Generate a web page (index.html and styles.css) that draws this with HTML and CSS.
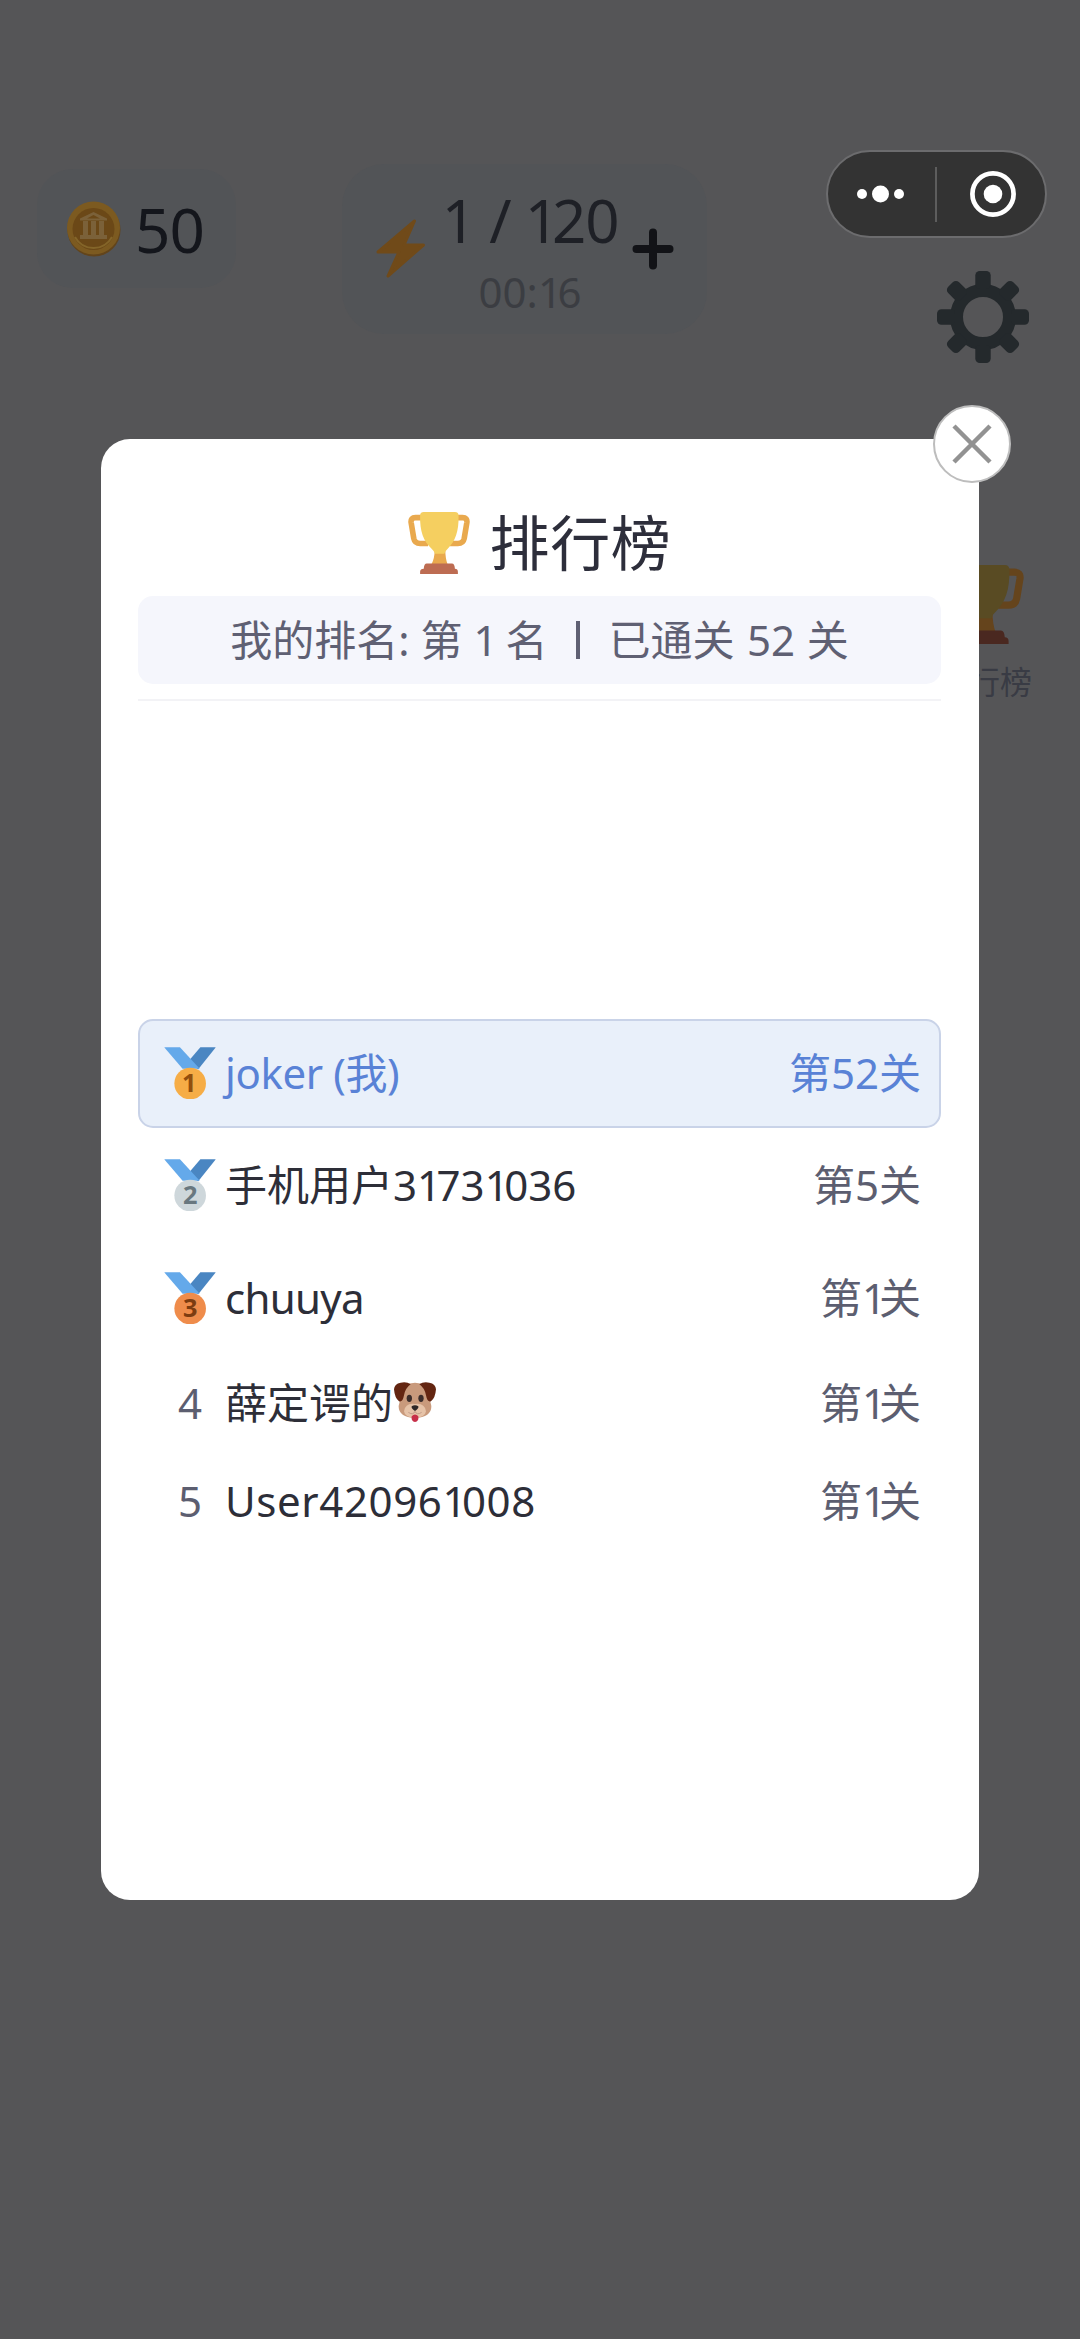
FILE: index.html
```html
<!DOCTYPE html>
<html lang="zh-CN">
<head>
<meta charset="utf-8">
<title>排行榜</title>
<link rel="stylesheet" href="styles.css">
</head>
<body>
<svg class="defs" width="0" height="0" aria-hidden="true">
  <symbol id="trophy" viewBox="0 0 186 187">
    <path class="t-handle" d="M40 17H22Q7 17 9 32L17 80Q20 95 36 95H60M146 17H164Q179 17 177 32L169 80Q166 95 150 95H126"/>
    <path class="t-stem" d="M80 112H112Q112 140 119 158H70Q80 140 80 112Z"/>
    <path class="t-bowl" d="M36 10Q37 0 47 0H141Q151 0 152 10C153 60 142 88 120 110Q112 117 109 126H81Q78 117 70 110C46 88 35 60 36 10Z"/>
    <path class="t-base" d="M56 155H132Q140 155 141 171Q150 171 150 180V187H36V180Q36 171 47 171Q48 155 56 155Z"/>
  </symbol>
  <symbol id="ribbon" viewBox="0 0 157 158">
    <path fill="#4a86c2" d="M110 1H157L103 68L75 42Z"/>
    <path fill="#64a9ea" d="M0 1H48L108 66H56Z"/>
    <circle cx="79" cy="111" r="48"/>
  </symbol>
</svg>

<header class="topbar">
  <div class="pill coins">
    <svg class="coin" viewBox="0 0 54 56">
      <circle cx="27" cy="29" r="26.500" fill="#62441b"/>
      <circle cx="26.500" cy="27" r="26.500" fill="#7c5a20"/>
      <circle cx="26.500" cy="28" r="21" fill="#6b4817"/>
      <path d="M8 36a21 21 0 0 0 37 0" fill="none" stroke="#846529" stroke-width="2"/>
      <path fill="#7b6139" d="M26.500 11L40 17.500V19.500H13V17.500ZM16 20H21V34H16ZM24 20H29V34H24ZM32 20H37V34H32ZM13 34H40V38H13Z"/>
      <path fill="#6b4817" d="M20 17.500L26.500 14L33 17.500Z"/>
    </svg>
    <span class="big">50</span>
  </div>
  <div class="pill energy">
    <svg class="bolt" viewBox="0 0 50 60"><path d="M38.500 2L28 26H47.500L12 57L23 33H2Z"/></svg>
    <div class="energy-text">
      <span class="mid">1 / <span class="one">1</span>20</span>
      <span class="timer">00:<span class="one">1</span>6</span>
    </div>
    <svg class="plus" viewBox="0 0 42 42"><path d="M21 4.500V37.500M4.500 21H37.500"/></svg>
  </div>
  <div class="side">
    <div class="capsule">
      <svg class="dots" viewBox="0 0 48 18"><circle cx="5" cy="9" r="5"/><circle cx="23.500" cy="9" r="8.500"/><circle cx="42" cy="9" r="5"/></svg>
      <i class="bar"></i>
      <svg class="target" viewBox="0 0 46 46"><circle cx="23" cy="23" r="20.600" fill="none" stroke="#fff" stroke-width="4.700"/><circle cx="23" cy="23" r="9.300"/></svg>
    </div>
    <svg class="gear" viewBox="-46 -46 92 92">
      <circle r="26.500" fill="none" stroke="#24292c" stroke-width="13"/>
      <g id="teeth"><rect x="-7.700" y="-46" width="15.400" height="18" rx="4.500"/><rect x="-7.700" y="28" width="15.400" height="18" rx="4.500"/><rect x="-46" y="-7.700" width="18" height="15.400" rx="4.500"/><rect x="28" y="-7.700" width="18" height="15.400" rx="4.500"/></g>
      <use href="#teeth" transform="rotate(45)"/>
    </svg>
    <div class="rank-entry">
      <svg class="trophy dim"><use href="#trophy"/></svg>
      <span>排行榜</span>
    </div>
  </div>
</header>

<section class="modal">
  <button class="close" aria-label="关闭"><svg viewBox="0 0 42 42"><path d="M3 3L39 39M39 3L3 39"/></svg></button>
  <h1 class="title"><svg class="trophy"><use href="#trophy"/></svg><span>排行榜</span></h1>
  <p class="mine"><span>我的排名: 第</span><span class="v1">1</span><span>名</span><span class="sep"></span><span>已通关</span><span class="v52">52</span><span>关</span></p>
  <ol class="list">
    <li class="row me"><span class="rank"><svg class="medal" viewBox="0 0 157 158"><use href="#ribbon" fill="#f6ad46"/><text x="76" y="138" fill="#914f0e">1</text></svg></span><span class="name joker">joker (我)</span><span class="level">第52关</span></li>
    <li class="row"><span class="rank"><svg class="medal" viewBox="0 0 157 158"><use href="#ribbon" fill="#ced7db"/><text x="79" y="138" fill="#68777f">2</text></svg></span><span class="name">手机用户3<span class="one">1</span>73<span class="one">1</span>036</span><span class="level">第5关</span></li>
    <li class="row"><span class="rank"><svg class="medal" viewBox="0 0 157 158"><use href="#ribbon" fill="#ef8c4b"/><text x="79" y="138" fill="#7d3c10">3</text></svg></span><span class="name chu">chuuya</span><span class="level">第<span class="one">1</span>关</span></li>
    <li class="row short"><span class="rank">4</span><span class="name">薛定谔的<svg class="dog" viewBox="0 0 126 120">
      <path fill="#c99a7c" d="M30 12Q63-8 96 12Q106 42 112 72Q113 105 63 108Q13 105 14 72Q20 42 30 12Z"/>
      <path fill="#e6c3a8" d="M63 66Q92 62 96 88Q94 106 63 108Q32 106 30 88Q34 62 63 66Z"/>
      <path fill="#632511" d="M50 7Q38-2 20 2Q1 5 0 22Q2 48 15 58Q26 62 30 40Q34 18 50 7ZM76 7Q88-2 106 2Q125 5 126 22Q124 48 111 58Q100 62 96 40Q92 18 76 7Z"/>
      <ellipse cx="46" cy="49" rx="8" ry="11" fill="#3b2d2b"/><ellipse cx="81" cy="49" rx="8" ry="11" fill="#3b2d2b"/>
      <path fill="#2e2727" d="M53 73Q63 67 73 73Q75 80 63 87Q51 80 53 73Z"/>
      <path fill="none" stroke="#b08a78" stroke-width="2" d="M43 91Q58 101 63 88Q68 101 83 91"/>
      <path fill="#c72f49" d="M53 103Q63 92 73 103Q75 119 63 120Q51 119 53 103Z"/>
    </svg></span><span class="level">第<span class="one">1</span>关</span></li>
    <li class="row short"><span class="rank">5</span><span class="name user">User42096<span class="one">1</span>008</span><span class="level">第<span class="one">1</span>关</span></li>
  </ol>
</section>
</body>
</html>
```
FILE: styles.css
```css
* { box-sizing: border-box; }
body {
  margin: 0;
  width: 1080px;
  height: 2339px;
  overflow: hidden;
  position: relative;
  background: #555557;
  font-family: "Noto Sans", "Noto Sans CJK SC", sans-serif;
  line-height: 1;
}
svg { display: block; flex: none; }
.defs { position: absolute; }
.one { letter-spacing: -4.5px; }

/* top bar */
.topbar {
  display: grid;
  grid-template-columns: 199px 365px 221px;
  column-gap: 106px;
  padding: 150px 0 0 37px;
  align-items: start;
}
.pill { display: flex; background: #525457; }
.coins { margin-top: 19px; height: 119px; border-radius: 36px; align-items: center; padding-left: 30px; gap: 14px; }
.coin { width: 54px; height: 56px; }
.big { font-size: 62px; color: #14161c; letter-spacing: -1px; }
.energy { margin-top: 14px; height: 170px; border-radius: 42px; padding-left: 34px; align-items: center; }
.bolt { width: 50px; height: 60px; fill: #704a19; stroke: #704a19; stroke-width: 3; stroke-linejoin: round; }
.energy-text { width: 204px; margin: 4px 0 0 2px; display: flex; flex-direction: column; align-items: center; color: #1e2026; }
.mid { font-size: 60px; white-space: nowrap; letter-spacing: -1.2px; }
.mid .one { letter-spacing: -7px; }
.timer { font-size: 42px; margin-top: 21px; color: #3b3d42; }
.plus { width: 42px; height: 42px; fill: none; stroke: #121317; stroke-width: 8; stroke-linecap: round; }
.side { margin-left: 13px; display: flex; flex-direction: column; }
.capsule {
  width: 221px; height: 88px;
  border-radius: 44px;
  border: 2px solid #6c6c6e;
  background: #333;
  display: flex; align-items: center;
  padding-left: 29px;
}
.dots { width: 48px; height: 18px; fill: #fff; }
.bar { width: 2px; height: 55px; margin: 0 33px 0 30px; background: #5d5d5d; }
.target { width: 46px; height: 46px; fill: #fff; }
.gear { width: 92px; height: 92px; margin: 33px 0 0 111px; fill: #24292c; }
.rank-entry { width: 96px; margin: 202px 0 0 110px; display: flex; flex-direction: column; align-items: center; font-size: 32px; color: #393b44; gap: 22px; }

.trophy { width: 62px; height: 62px; }
.t-handle { fill: none; stroke: var(--handle, #e9a94e); stroke-width: 17; }
.t-stem { fill: var(--handle, #e9a94e); }
.t-bowl { fill: var(--bowl, #f5cf60); }
.t-base { fill: var(--base, #bd6c52); }
.dim { width: 79px; height: 79px; --handle: #65441c; --bowl: #594b23; --base: #4a2820; }

/* leaderboard dialog */
.modal {
  position: absolute;
  left: 101px; top: 439px;
  width: 878px; height: 1461px;
  border-radius: 29px;
  background: #fff;
  padding: 69px 38px 0 37px;
}
.close {
  position: absolute;
  right: -32px; top: -34px;
  width: 78px; height: 78px;
  border: 2px solid #bdbdbd;
  border-radius: 50%;
  background: #fff;
  padding: 0;
  display: grid; place-items: center;
}
.close svg { width: 42px; height: 42px; stroke: #929292; stroke-width: 4.5; }
.title { margin: 0; height: 88px; display: flex; justify-content: center; align-items: flex-start; gap: 20px; font-size: 60px; font-weight: 400; letter-spacing: 0.6px; color: #2d2e3b; line-height: 70px; }
.title .trophy { margin-top: 4px; }
.mine {
  margin: 0; height: 88px;
  border-radius: 15px;
  background: #f5f6fc;
  display: flex; align-items: center; justify-content: center;
  font-size: 42px; color: #5f6073;
  white-space: pre;
}
.v1 { margin: 0 8px 0 11px; }
.v52 { margin: 0 11.5px 0 12.5px; }
.sep { width: 4px; height: 38px; background: #5f6073; margin: 0 29px 0 28px; }
.list {
  list-style: none;
  margin: 15px 0 0; padding: 318px 0 0;
  border-top: 2px solid #f3f3f6;
  display: flex; flex-direction: column;
  gap: 3.3px;
}
.row {
  height: 109px;
  border: 2px solid transparent;
  border-radius: 15px;
  display: flex; align-items: center;
  padding: 0 18px 1px 24px;
  font-size: 42px;
  color: #2d2e38;
}
.short { height: 95px; }
.rank { width: 52px; display: flex; justify-content: center; color: #5c5e70; }
.medal { width: 52px; height: 52px; }
.medal text { font-weight: 700; font-size: 77px; text-anchor: middle; }
.name { flex: 1; margin-left: 9px; white-space: nowrap; display: flex; }
.level { color: #5c5e70; white-space: nowrap; }
.level .one { letter-spacing: -7px; }
.dog { width: 42px; height: 40px; margin-left: 1px; }
.me { background: #e9f0fa; border-color: #c9d3e8; color: #5982d6; }
.me .level { color: #5982d6; }
.joker { display: block; letter-spacing: -0.4px; }
.chu { letter-spacing: -0.7px; }
.user { letter-spacing: 0.6px; }
```
